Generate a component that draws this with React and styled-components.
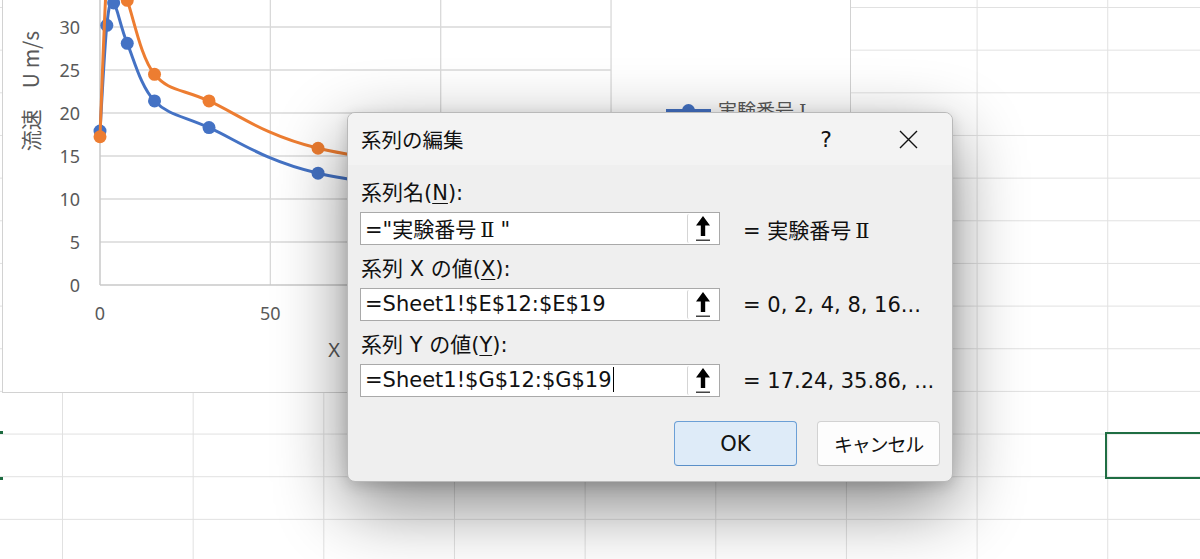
import React from 'react';
import styled, { createGlobalStyle } from 'styled-components';

const GlobalStyle = createGlobalStyle`
  html, body { margin: 0; padding: 0; background: #fff; overflow: hidden; }
  #root { width: 1200px; height: 559px; }
`;

const Sheet = styled.div`
  position: relative;
  width: 1200px;
  height: 559px;
  overflow: hidden;
  background-color: #fff;
  background-image:
    linear-gradient(to right, #e1e1e1 1px, transparent 1px),
    linear-gradient(to bottom, #e1e1e1 1px, transparent 1px);
  background-size: 130.67px 42.67px;
  background-position: 62px 7px;
`;

const RowMark = styled.div`
  position: absolute;
  left: 0;
  top: ${(p) => p.$top}px;
  width: 3px;
  height: 3px;
  background: #1d6b40;
`;

const SelectedCell = styled.div`
  position: absolute;
  left: 1105px;
  top: 432px;
  width: 130px;
  height: 47px;
  box-sizing: border-box;
  border: 2px solid #1f6e43;
`;

const ChartObject = styled.div`
  position: absolute;
  left: 2px;
  top: -1px;
  width: 849px;
  height: 394px;
  box-sizing: border-box;
  background: #fff;
  border: 1px solid #d2d2d2;
`;

const ChartSvg = styled.svg`
  display: block;
  width: 847px;
  height: 392px;
`;

const Dialog = styled.div`
  position: absolute;
  left: 347px;
  top: 112px;
  width: 606px;
  height: 370px;
  box-sizing: border-box;
  border: 1px solid #b9b9b9;
  border-radius: 8px;
  background: #efefef;
  box-shadow: 0 24px 70px rgba(0, 0, 0, 0.48), 0 4px 14px rgba(0, 0, 0, 0.14);
  display: flex;
  flex-direction: column;
  overflow: hidden;
  font-family: "DejaVu Sans", "Noto Sans CJK JP", sans-serif;
  color: #111;
`;

const TitleBar = styled.div`
  height: 52px;
  display: flex;
  align-items: center;
  background: #f3f3f3;
`;

const Title = styled.div`
  flex: 1;
  padding-left: 13px;
  font-family: "Noto Sans CJK JP", sans-serif;
  font-size: 20.5px;
  line-height: 28px;
`;

const CaptionButton = styled.div`
  width: ${(p) => p.$w}px;
  height: 100%;
  display: flex;
  align-items: center;
  justify-content: center;
  font-size: 22px;
`;

const Body = styled.div`
  padding: 14px 12px 0 12px;
  display: flex;
  flex-direction: column;
`;

const FieldLabel = styled.div`
  height: 28px;
  line-height: 28px;
  padding-left: 1px;
  margin-bottom: 5px;
  font-size: 21px;
  white-space: nowrap;
`;

const Key = styled.span`
  text-decoration: underline;
  text-underline-offset: 3px;
  text-decoration-thickness: 1px;
`;

const FieldRow = styled.div`
  display: flex;
  align-items: center;
  gap: 23px;
  margin-bottom: 10px;
`;

const RefInput = styled.div`
  width: 360px;
  height: 33px;
  box-sizing: border-box;
  border: 1px solid #a9a9a9;
  background: #fff;
  display: flex;
`;

const InputText = styled.div`
  flex: 1;
  padding-left: 4px;
  font-size: 21px;
  line-height: 31px;
  white-space: nowrap;
  overflow: hidden;
`;

const Jp = styled.span`
  font-family: "Noto Sans CJK JP", sans-serif;
`;

const Numeral = styled.span`
  display: inline-block;
  font-family: "DejaVu Serif", serif;
  margin: 0 6px 0 4px;
`;

const Caret = styled.span`
  display: inline-block;
  width: 1px;
  height: 25px;
  margin-left: 1px;
  background: #000;
  vertical-align: -5px;
`;

const RefButton = styled.div`
  width: 31px;
  margin: 1px 1px 1px 0;
  box-sizing: border-box;
  border-left: 1px solid #d5d5d5;
  border-radius: 2px;
  background: #fff;
  display: flex;
  align-items: center;
  justify-content: center;
`;

const Preview = styled.div`
  font-size: 21px;
  white-space: nowrap;
`;

const Footer = styled.div`
  margin-top: auto;
  padding: 0 12px 15px;
  display: flex;
  justify-content: flex-end;
  gap: 20px;
`;

const Button = styled.div`
  width: 123px;
  height: 45px;
  box-sizing: border-box;
  border-radius: 4px;
  display: flex;
  align-items: center;
  justify-content: center;
  font-size: ${(p) => (p.$jp ? '19px' : '21px')};
  letter-spacing: ${(p) => (p.$jp ? '-1.2px' : '0')};
  font-family: ${(p) => (p.$jp ? '"Noto Sans CJK JP", sans-serif' : 'inherit')};
  background: ${(p) => (p.$primary ? '#deebf8' : '#fdfdfd')};
  border: 1px solid ${(p) => (p.$primary ? '#6b9fd6' : '#d2d2d2')};
  border-bottom-color: ${(p) => (p.$primary ? '#5a8fc8' : '#bfbfbf')};
`;

const RefArrow = () => (
  <svg width="16" height="27" viewBox="0 0 16 27">
    <path d="M8 1 L15 10.5 L10.2 10.5 L10.2 21 L5.8 21 L5.8 10.5 L1 10.5 Z" fill="#000" />
    <rect x="1" y="24.5" width="14" height="1.5" fill="#444" />
  </svg>
);

const CloseIcon = () => (
  <svg width="19" height="19" viewBox="0 0 19 19">
    <path d="M1 1 L18 18 M18 1 L1 18" stroke="#111" strokeWidth="1.4" fill="none" />
  </svg>
);

// ---- chart geometry (page coordinates) ----
const X0 = 100;
const XS = 3.407;
const Y0 = 285;
const YS = 8.6;
const px = (x) => X0 + XS * x;
const py = (v) => Y0 - YS * v;
const XS_DATA = [0, 2, 4, 8, 16, 32, 64, 128];
const BLUE = [17.9, 30.2, 32.8, 28.1, 21.4, 18.3, 13.0, 9.5];
const ORANGE = [17.24, 35.86, 38.2, 33.1, 24.5, 21.4, 15.9, 12.2];

function smoothPath(vals) {
  const pts = vals.map((v, i) => [px(XS_DATA[i]), py(v)]);
  let d = `M${pts[0][0]} ${pts[0][1]}`;
  for (let i = 0; i < pts.length - 1; i++) {
    const p0 = pts[i - 1] || pts[i];
    const p1 = pts[i];
    const p2 = pts[i + 1];
    const p3 = pts[i + 2] || p2;
    const c1 = [p1[0] + (p2[0] - p0[0]) / 6, p1[1] + (p2[1] - p0[1]) / 6];
    const c2 = [p2[0] - (p3[0] - p1[0]) / 6, p2[1] - (p3[1] - p1[1]) / 6];
    d += ` C${c1[0]} ${c1[1]} ${c2[0]} ${c2[1]} ${p2[0]} ${p2[1]}`;
  }
  return d;
}

const Series = ({ vals, color }) => (
  <g>
    <path d={smoothPath(vals)} stroke={color} strokeWidth="3" fill="none" strokeLinejoin="round" />
    {vals.map((v, i) => (
      <circle key={i} cx={px(XS_DATA[i])} cy={py(v)} r="6.5" fill={color} />
    ))}
  </g>
);

const Chart = () => {
  const yTicks = [0, 5, 10, 15, 20, 25, 30];
  const xTicks = [0, 50];
  const gridX = [50, 100, 150];
  const top = py(35);
  return (
    <ChartObject>
      <ChartSvg viewBox="3 0 847 392">
        {[5, 10, 15, 20, 25, 30, 35].map((v) => (
          <line key={v} x1={X0} x2={px(150)} y1={py(v)} y2={py(v)} stroke="#d9d9d9" strokeWidth="1.3" />
        ))}
        {gridX.map((x) => (
          <line key={x} x1={px(x)} x2={px(x)} y1={top} y2={Y0} stroke="#d9d9d9" strokeWidth="1.3" />
        ))}
        <line x1={X0} x2={X0} y1={top} y2={Y0} stroke="#c9c9c9" strokeWidth="1.5" />
        <line x1={X0} x2={px(150)} y1={Y0} y2={Y0} stroke="#c9c9c9" strokeWidth="1.5" />
        <g fontFamily="'Noto Sans', sans-serif" fontSize="18" fill="#595959">
          {yTicks.map((v) => (
            <text key={v} x="80" y={py(v) + 6.5} textAnchor="end">{v}</text>
          ))}
          {xTicks.map((x) => (
            <text key={x} x={px(x)} y="320" textAnchor="middle">{x}</text>
          ))}
          <text x="334" y="357" textAnchor="middle" fontSize="20">X</text>
          <text
            transform="translate(39,91) rotate(-90)"
            textAnchor="middle"
            fontSize="21"
            fontFamily="'Noto Sans CJK JP', sans-serif"
          >
            流速{'\u3000'}U m/s
          </text>
        </g>
        <Series vals={BLUE} color="#4472c4" />
        <Series vals={ORANGE} color="#ed7d31" />
        <g>
          <line x1="666" x2="711" y1="110.5" y2="110.5" stroke="#4472c4" strokeWidth="3" />
          <circle cx="688.5" cy="110.5" r="6.5" fill="#4472c4" />
          <text x="718" y="118" fontSize="19" fill="#595959" fontFamily="'Noto Sans CJK JP', sans-serif">
            実験番号<tspan fontFamily="'DejaVu Serif', serif" dx="5">Ⅰ</tspan>
          </text>
        </g>
      </ChartSvg>
    </ChartObject>
  );
};

const Field = ({ label, value, preview, caret }) => (
  <>
    <FieldLabel>{label}</FieldLabel>
    <FieldRow>
      <RefInput>
        <InputText>
          {value}
          {caret && <Caret />}
        </InputText>
        <RefButton>
          <RefArrow />
        </RefButton>
      </RefInput>
      <Preview>{preview}</Preview>
    </FieldRow>
  </>
);

export default function App() {
  return (
    <>
      <GlobalStyle />
      <Sheet>
        <RowMark $top={431} />
        <RowMark $top={477} />
        <SelectedCell />
        <Chart />
        <Dialog>
          <TitleBar>
            <Title>系列の編集</Title>
            <CaptionButton $w={76}>?</CaptionButton>
            <CaptionButton $w={88}>
              <CloseIcon />
            </CaptionButton>
          </TitleBar>
          <Body>
            <Field
              label={<>系列名(<Key>N</Key>):</>}
              value={<>="<Jp>実験番号</Jp><Numeral>Ⅱ</Numeral>"</>}
              preview={<>= <Jp>実験番号</Jp><Numeral>Ⅱ</Numeral></>}
            />
            <Field
              label={<>系列 X の値(<Key>X</Key>):</>}
              value="=Sheet1!$E$12:$E$19"
              preview="= 0, 2, 4, 8, 16..."
            />
            <Field
              label={<>系列 Y の値(<Key>Y</Key>):</>}
              value="=Sheet1!$G$12:$G$19"
              preview="= 17.24, 35.86, ..."
              caret
            />
          </Body>
          <Footer>
            <Button $primary>OK</Button>
            <Button $jp>キャンセル</Button>
          </Footer>
        </Dialog>
      </Sheet>
    </>
  );
}
